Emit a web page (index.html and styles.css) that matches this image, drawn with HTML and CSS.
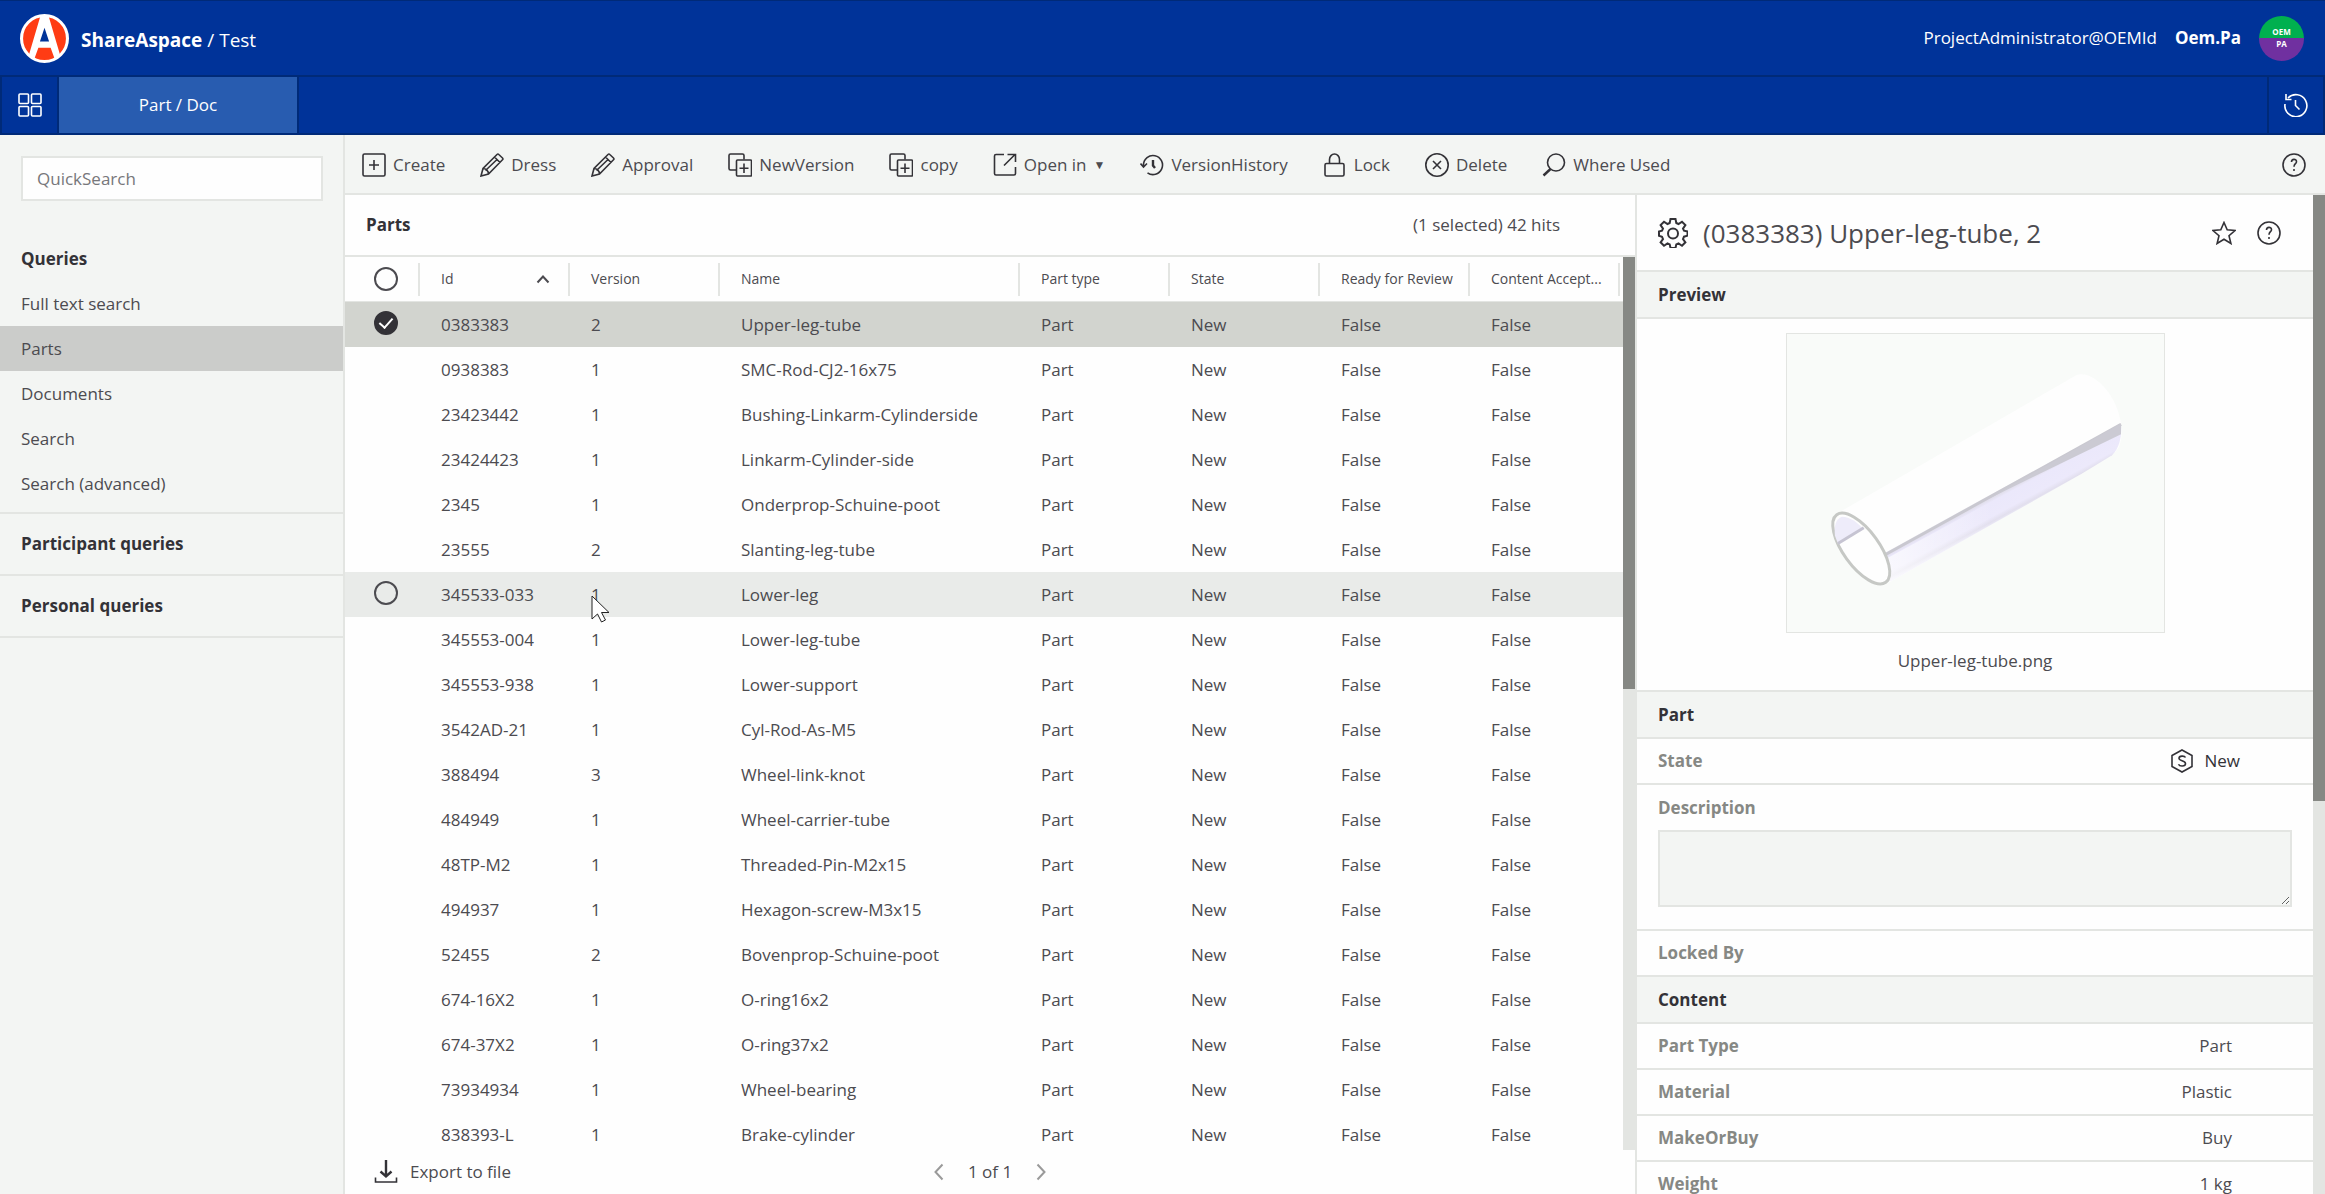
FILE: index.html
```html
<!DOCTYPE html>
<html lang="en">
  <head>
    <meta charset="utf-8" />
    <meta name="viewport" content="width=device-width, initial-scale=1" />
    <title>ShareAspace / Test</title>
    <link rel="stylesheet" href="styles.css">
  </head>
  <body>
    <!-- shared icons -->
    <svg class="sprite" aria-hidden="true">
      <symbol id="i-pencil" viewBox="0 0 24 24"><path d="M1 23l2-7.500L17 1.500c.6-.6 1.200-.6 1.800 0L22.500 5c.6.600.6 1.200 0 1.800L8.500 21zM3 15.500c3 0 5.500 2.500 5.500 5.500M14.500 4l5.500 5.500M5.500 17.500L17 6.500" /></symbol>
      <symbol id="i-copy" viewBox="0 0 24 24"><path d="M8 17H2.500C1.500 17 1 16.500 1 15.500V2.500C1 1.500 1.500 1 2.500 1h12c1 0 1.500.5 1.500 1.500V6.500" /><rect x="8.500" y="7" width="15" height="16" rx="1" /><path d="M16 10.500v9.500M11.500 15.200h9" /></symbol>
      <symbol id="i-help" viewBox="0 0 24 24"><circle cx="12" cy="12" r="11" /><path d="M9.500 9c0-3.500 5-3.500 5-.3 0 2-2.500 2.100-2.500 5M12 16v2" /></symbol>
    </svg>

    <header class="header">
      <a class="brand" href="#">
        <svg class="logo" viewBox="0 0 48 48">
          <circle cx="24" cy="24" r="22.500" fill="#ff3c14" stroke="#fff" stroke-width="3" />
          <path fill="#fff" d="M20 2h8l11.500 39-5.500 3-4-11H18l-4 11-5.500-3z" />
          <path fill="#003399" d="M24 13.500L28.500 27h-9z" />
        </svg>
        <span><b>ShareAspace</b> / Test</span>
      </a>
      <div class="user">
        <span>ProjectAdministrator@OEMId</span>
        <b>Oem.Pa</b>
        <span class="avatar"><span>OEM</span><span>PA</span></span>
      </div>
    </header>

    <nav class="nav">
      <button class="nav-btn" aria-label="Apps">
        <svg class="icon" viewBox="0 0 24 24"><rect x="1" y="1" width="9.500" height="9.500" rx="1" /><rect x="13.500" y="1" width="9.500" height="9.500" rx="1" /><rect x="1" y="13.500" width="9.500" height="9.500" rx="1" /><rect x="13.500" y="13.500" width="9.500" height="9.500" rx="1" /></svg>
      </button>
      <a class="tab" href="#">Part / Doc</a>
      <button class="nav-btn history" aria-label="History">
        <svg class="icon" viewBox="0 0 24 24"><path d="M4 5a11 11 0 1 1-3 6M2 1v5.500h5.500M11.500 7v5.500l4 4" /></svg>
      </button>
    </nav>

    <div class="page">
      <aside class="sidebar">
        <input class="quick" type="text" placeholder="QuickSearch" aria-label="QuickSearch" />
        <h2>Queries</h2>
        <a class="query" href="#">Full text search</a>
        <a class="query active" href="#">Parts</a>
        <a class="query" href="#">Documents</a>
        <a class="query" href="#">Search</a>
        <a class="query" href="#">Search (advanced)</a>
        <h2 class="group">Participant queries</h2>
        <h2 class="group">Personal queries</h2>
      </aside>

      <main class="main">
        <div class="toolbar">
          <button><svg class="icon" viewBox="0 0 24 24"><rect x="1" y="1" width="22" height="22" rx="1.500" /><path d="M12 7v10M7 12h10" /></svg>Create</button>
          <button><svg class="icon"><use href="#i-pencil" /></svg>Dress</button>
          <button><svg class="icon"><use href="#i-pencil" /></svg>Approval</button>
          <button><svg class="icon"><use href="#i-copy" /></svg>NewVersion</button>
          <button><svg class="icon"><use href="#i-copy" /></svg>copy</button>
          <button><svg class="icon" viewBox="0 0 24 24"><path d="M11 1.500H3C2 1.500 1.500 2 1.500 3v17.500c0 1 .5 1.500 1.500 1.500h18c1 0 1.500-.5 1.500-1.500V14M11 12.500L22 1.500M14.500 1.500H22.500V9" /></svg>Open in<span class="caret">▼</span></button>
          <button><svg class="icon" viewBox="0 0 24 24"><path d="M3.500 14V12a9.500 9.500 0 1 1 4 7.800M0.500 10.500l3 3.500 3.500-3.500" /><path class="thick" d="M13 7v5.500l2 2.500" /></svg>VersionHistory</button>
          <button><svg class="icon" viewBox="0 0 24 24"><rect x="2" y="10.500" width="19" height="12.500" rx="1.500" /><path d="M6.500 10V6.500a5 5.500 0 0 1 10 0V10" /></svg>Lock</button>
          <button><svg class="icon" viewBox="0 0 24 24"><circle cx="12" cy="12" r="11.200" /><path d="M8 8l8 8M16 8l-8 8" /></svg>Delete</button>
          <button><svg class="icon" viewBox="0 0 24 24"><circle cx="14" cy="9.500" r="8.500" /><path class="thick" d="M8.500 16L1.500 22.500" /></svg>Where Used</button>
          <button class="help" aria-label="Help"><svg class="icon"><use href="#i-help" /></svg></button>
        </div>

        <div class="split">
          <section class="list">
            <div class="list-title">
              <h1>Parts</h1>
              <span>(1 selected) 42 hits</span>
            </div>
            <div class="scroll-area">
              <div class="table-wrap">
                <table>
                  <colgroup>
                    <col class="c-check" /><col class="c" /><col class="c" /><col class="c-name" />
                    <col class="c" /><col class="c" /><col class="c" /><col class="c" /><col />
                  </colgroup>
                  <thead>
                    <tr>
                      <th><div><input type="checkbox" aria-label="Select all" /></div></th>
                      <th><div>Id<svg class="sort" viewBox="0 0 14 9"><path d="M1.500 7.500L7 1.500l5.500 6" /></svg></div></th>
                      <th><div>Version</div></th>
                      <th><div>Name</div></th>
                      <th><div>Part type</div></th>
                      <th><div>State</div></th>
                      <th><div>Ready for Review</div></th>
                      <th><div>Content Accept...</div></th>
                      <td></td>
                    </tr>
                  </thead>
                  <tbody>
                    <tr class="selected"><td><input type="checkbox" aria-label="Select row" checked /></td><td>0383383</td><td>2</td><td>Upper-leg-tube</td><td>Part</td><td>New</td><td>False</td><td>False</td><td></td></tr>
                    <tr><td></td><td>0938383</td><td>1</td><td>SMC-Rod-CJ2-16x75</td><td>Part</td><td>New</td><td>False</td><td>False</td><td></td></tr>
                    <tr><td></td><td>23423442</td><td>1</td><td>Bushing-Linkarm-Cylinderside</td><td>Part</td><td>New</td><td>False</td><td>False</td><td></td></tr>
                    <tr><td></td><td>23424423</td><td>1</td><td>Linkarm-Cylinder-side</td><td>Part</td><td>New</td><td>False</td><td>False</td><td></td></tr>
                    <tr><td></td><td>2345</td><td>1</td><td>Onderprop-Schuine-poot</td><td>Part</td><td>New</td><td>False</td><td>False</td><td></td></tr>
                    <tr><td></td><td>23555</td><td>2</td><td>Slanting-leg-tube</td><td>Part</td><td>New</td><td>False</td><td>False</td><td></td></tr>
                    <tr class="hovered"><td><input type="checkbox" aria-label="Select row" /></td><td>345533-033</td><td class="pointed">1<svg class="cursor" viewBox="0 0 19 28"><path d="M1 1v23l5.500-5 4 8 4-2-4-7.500H18z" /></svg></td><td>Lower-leg</td><td>Part</td><td>New</td><td>False</td><td>False</td><td></td></tr>
                    <tr><td></td><td>345553-004</td><td>1</td><td>Lower-leg-tube</td><td>Part</td><td>New</td><td>False</td><td>False</td><td></td></tr>
                    <tr><td></td><td>345553-938</td><td>1</td><td>Lower-support</td><td>Part</td><td>New</td><td>False</td><td>False</td><td></td></tr>
                    <tr><td></td><td>3542AD-21</td><td>1</td><td>Cyl-Rod-As-M5</td><td>Part</td><td>New</td><td>False</td><td>False</td><td></td></tr>
                    <tr><td></td><td>388494</td><td>3</td><td>Wheel-link-knot</td><td>Part</td><td>New</td><td>False</td><td>False</td><td></td></tr>
                    <tr><td></td><td>484949</td><td>1</td><td>Wheel-carrier-tube</td><td>Part</td><td>New</td><td>False</td><td>False</td><td></td></tr>
                    <tr><td></td><td>48TP-M2</td><td>1</td><td>Threaded-Pin-M2x15</td><td>Part</td><td>New</td><td>False</td><td>False</td><td></td></tr>
                    <tr><td></td><td>494937</td><td>1</td><td>Hexagon-screw-M3x15</td><td>Part</td><td>New</td><td>False</td><td>False</td><td></td></tr>
                    <tr><td></td><td>52455</td><td>2</td><td>Bovenprop-Schuine-poot</td><td>Part</td><td>New</td><td>False</td><td>False</td><td></td></tr>
                    <tr><td></td><td>674-16X2</td><td>1</td><td>O-ring16x2</td><td>Part</td><td>New</td><td>False</td><td>False</td><td></td></tr>
                    <tr><td></td><td>674-37X2</td><td>1</td><td>O-ring37x2</td><td>Part</td><td>New</td><td>False</td><td>False</td><td></td></tr>
                    <tr><td></td><td>73934934</td><td>1</td><td>Wheel-bearing</td><td>Part</td><td>New</td><td>False</td><td>False</td><td></td></tr>
                    <tr><td></td><td>838393-L</td><td>1</td><td>Brake-cylinder</td><td>Part</td><td>New</td><td>False</td><td>False</td><td></td></tr>
                  </tbody>
                </table>
              </div>
              <div class="scrollbar"><div class="thumb list-thumb"></div></div>
            </div>
            <footer class="list-footer">
              <button class="export"><svg class="icon" viewBox="0 0 24 24"><path d="M1.500 17.500v4.500h21v-4.500" /><path class="thick" d="M12 0v16M6.500 11.500l5.500 5 5.500-5" /></svg>Export to file</button>
              <div class="pager">
                <button aria-label="Previous page"><svg viewBox="0 0 10 18"><path d="M8.500 1.500L1.500 9l7 7.500" /></svg></button>
                <span>1 of 1</span>
                <button aria-label="Next page"><svg viewBox="0 0 10 18"><path d="M1.500 1.500L8.500 9l-7 7.500" /></svg></button>
              </div>
            </footer>
          </section>

          <section class="detail">
            <div class="detail-body">
              <div class="detail-title">
                <svg class="gear" viewBox="0 0 30 30"><path d="M12.500 1h5l.8 4 2.200 1 3.500-2.300 3.400 3.400-2.400 3.500 1 2.100 3.500.8v4.200l-3.500 1-1 2.300 2.400 3.300-3.400 3.500-3.500-2.400-2.200 1-.8 3.600h-5l-.8-3.600-2.200-1L6 27.800l-3.400-3.500L5 21l-1-2.300-3-1v-4.200l3-.8 1-2.100-2.400-3.500L6 3.700 9.500 6l2.200-1z" /><circle cx="15" cy="15.500" r="5" /></svg>
                <h2>(0383383) Upper-leg-tube, 2</h2>
                <button aria-label="Favourite"><svg class="icon" viewBox="0 0 24 24"><path d="M12 1.500l3.200 7.300 7.800.7-6 5.200 1.900 7.800L12 18.300 5.100 22.500 7 14.700 1 9.500l7.800-.7z" /></svg></button>
                <button aria-label="Help"><svg class="icon"><use href="#i-help" /></svg></button>
              </div>
              <h3>Preview</h3>
              <figure class="preview">
                <svg class="tube" viewBox="0 0 379 300">
                  <defs>
                    <linearGradient id="shade" gradientUnits="userSpaceOnUse" x1="216" y1="155" x2="230" y2="181">
                      <stop offset="0" stop-color="#fefefe" />
                      <stop offset="0.100" stop-color="#dddbe6" />
                      <stop offset="0.250" stop-color="#ebe8fb" />
                      <stop offset="0.700" stop-color="#ece9fb" />
                      <stop offset="0.850" stop-color="#e2dfee" />
                      <stop offset="1" stop-color="#f0eefb" />
                    </linearGradient>
                    <linearGradient id="fade" x1="0" x2="1">
                      <stop offset="0" stop-color="#fff" stop-opacity="0.700" />
                      <stop offset="0.450" stop-color="#fff" stop-opacity="0" />
                    </linearGradient>
                  </defs>
                  <path fill="#fefefe" d="M55 178L290 42c14-7 38 13 45 43 4 20 0 31-8 37L103 250z" />
                  <path fill="url(#shade)" d="M99 220L336 88c1 14-1 26-9 34l-31 19L104 249z" />
                  <path fill="url(#fade)" d="M100 226L336 98c1 10-1 18-9 24l-31 19L104 249z" />
                  <path fill="none" stroke="#c9c8d0" stroke-width="3" d="M99 222L336 91" />
                  <path fill="#cbcad3" d="M200 167L336 90v11z" />
                  <ellipse cx="74.500" cy="216" rx="42" ry="18" transform="rotate(54 74.500 216)" fill="#fefefe" stroke="#c6c8c5" stroke-width="3" />
                  <path fill="#eeecfa" d="M48 203c-1-10 1-17 7-19 8 0 16 6 20 11L51 211z" />
                  <path stroke="#c6c4d2" stroke-width="3" d="M51 211l26-16" />
                </svg>
                <figcaption>Upper-leg-tube.png</figcaption>
              </figure>
              <h3>Part</h3>
              <dl>
                <div class="field state">
                  <dt>State</dt>
                  <dd><svg class="icon" viewBox="0 0 24 24"><path d="M12 1l10 5.500v11L12 23 2 17.500v-11zM15.500 8.500c-1-2-6.500-2-6.500.8 0 3 6.500 2 6.500 5.400 0 3-6 3-7 .6" /></svg>New</dd>
                </div>
              </dl>
              <div class="description">
                <label for="description">Description</label>
                <textarea id="description"></textarea>
              </div>
              <dl>
                <div class="field"><dt>Locked By</dt><dd></dd></div>
              </dl>
              <h3>Content</h3>
              <dl>
                <div class="field"><dt>Part Type</dt><dd>Part</dd></div>
                <div class="field"><dt>Material</dt><dd>Plastic</dd></div>
                <div class="field"><dt>MakeOrBuy</dt><dd>Buy</dd></div>
                <div class="field"><dt>Weight</dt><dd>1 kg</dd></div>
              </dl>
            </div>
            <div class="scrollbar"><div class="thumb detail-thumb"></div></div>
          </section>
        </div>
      </main>
    </div>
  </body>
</html>
```

FILE: styles.css
```css
* {
  box-sizing: border-box;
}
body {
  margin: 0;
  height: 100vh;
  display: flex;
  flex-direction: column;
  overflow: hidden;
  font-family: "Open Sans", "Noto Sans", sans-serif;
  font-size: 17px;
  line-height: 24px;
  color: #4c4b50;
  background-color: #fefefe;
}
a {
  color: inherit;
  text-decoration: none;
}
h1,
h2,
h3,
dl,
dd,
figure {
  margin: 0;
}
h1,
h2,
h3 {
  font-size: 17px;
  font-weight: 700;
  color: #333237;
}
b {
  font-weight: 700;
}
button {
  display: flex;
  align-items: center;
  padding: 0;
  border: none;
  background: none;
  font: inherit;
  color: inherit;
  cursor: pointer;
}
svg {
  flex: none;
}
.sprite {
  display: none;
}
.icon {
  width: 24px;
  height: 24px;
  fill: none;
  stroke: #333237;
  stroke-width: 1.6px;
}
.thick {
  stroke-width: 2.4px;
}

/* top bars */
.header {
  height: 77px;
  flex: none;
  display: flex;
  justify-content: space-between;
  align-items: center;
  padding: 0 21px 0 20px;
  color: #fff;
  background-color: #003399;
  border-top: 1px solid #002a78;
  border-bottom: 2px solid #002a78;
}
.brand {
  display: flex;
  align-items: center;
  gap: 12px;
  font-size: 19px;
  line-height: 28px;
}
.brand span {
  padding-top: 3px;
}
.logo {
  width: 49px;
  height: 49px;
}
.user {
  display: flex;
  align-items: center;
  gap: 18px;
}
.avatar {
  width: 45px;
  height: 45px;
  display: flex;
  flex-direction: column;
  justify-content: center;
  border-radius: 50%;
  background: linear-gradient(#00b04f 50%, #7030a0 50%);
  font-size: 8px;
  font-weight: 700;
  line-height: 12px;
  text-align: center;
}
.nav {
  height: 58px;
  flex: none;
  display: flex;
  color: #fff;
  background-color: #003399;
  border: solid #002a78;
  border-width: 0 2px 2px;
}
.nav .icon {
  stroke: #fff;
}
.nav-btn {
  width: 57px;
  justify-content: center;
  border-right: 2px solid #002a78;
}
.history {
  margin-left: auto;
  width: 56px;
  border-right: none;
  border-left: 2px solid #002a78;
}
.tab {
  width: 240px;
  line-height: 56px;
  text-align: center;
  background-color: #285cb0;
  border-right: 2px solid #002a78;
}

.page {
  flex: 1;
  min-height: 0;
  display: flex;
}
.sidebar {
  width: 345px;
  flex: none;
  background-color: #f3f5f3;
  border-right: 2px solid #e3e5e2;
}
.quick {
  display: block;
  width: 302px;
  height: 45px;
  margin: 21px 0 35px 21px;
  padding: 0 14px;
  font: inherit;
  border: 2px solid #e3e5e2;
  background-color: #fefefe;
}
.quick::placeholder {
  color: #77777b;
}
.sidebar h2,
.query {
  display: block;
  padding: 0 21px;
  line-height: 45px;
}
.active {
  background-color: #cbccca;
}
.query + .group {
  margin-top: 6px;
  border-top: 2px solid #e3e5e2;
}
.sidebar .group {
  line-height: 60px;
  border-bottom: 2px solid #e3e5e2;
}

.main {
  flex: 1;
  min-width: 0;
  display: flex;
  flex-direction: column;
}
.toolbar {
  height: 60px;
  flex: none;
  display: flex;
  gap: 35px;
  padding: 2px 19px 0 17px;
  background-color: #f3f5f3;
  border-bottom: 2px solid #e3e5e2;
}
.toolbar button {
  gap: 7px;
}
.toolbar .help {
  margin-left: auto;
}
.caret {
  font-size: 12px;
}
.split {
  flex: 1;
  min-height: 0;
  display: flex;
}

/* parts list */
.list {
  flex: 1;
  min-width: 0;
  display: flex;
  flex-direction: column;
}
.list-title {
  height: 62px;
  flex: none;
  display: flex;
  align-items: center;
  justify-content: space-between;
  padding: 0 75px 0 21px;
  border-bottom: 2px solid #e3e5e2;
}
.scroll-area {
  flex: 1;
  min-height: 0;
  display: flex;
}
.table-wrap {
  flex: 1;
  min-width: 0;
  overflow: hidden;
}
table {
  width: 100%;
  table-layout: fixed;
  border-collapse: separate;
  border-spacing: 0;
}
.c-check {
  width: 75px;
}
.c {
  width: 150px;
}
.c-name {
  width: 300px;
}
th {
  height: 45px;
  padding: 0;
  border-bottom: 1px solid #e3e5e2;
  font-size: 14px;
  font-weight: 400;
  text-align: left;
  white-space: nowrap;
}
thead td {
  border-bottom: 1px solid #e3e5e2;
}
th div {
  height: 33px;
  display: flex;
  align-items: center;
  justify-content: space-between;
  padding: 0 18px 0 21px;
  border-right: 2px solid #e3e5e2;
}
th:nth-child(7) div,
th:nth-child(8) div {
  padding-right: 0;
}
.sort {
  width: 14px;
  height: 9px;
  fill: none;
  stroke: currentColor;
  stroke-width: 2px;
}
tbody td {
  height: 45px;
  padding: 0 21px;
}
th:first-child div,
tbody td:first-child {
  padding: 0 0 0 29px;
}
tbody td:first-child {
  padding-bottom: 4px;
}
tbody td:last-child {
  padding: 0;
}
.selected {
  background-color: #d2d4cf;
}
.hovered {
  background-color: #e9ebe9;
}
input[type="checkbox"] {
  appearance: none;
  display: flex;
  align-items: center;
  justify-content: center;
  flex: none;
  width: 24px;
  height: 24px;
  margin: 0;
  border: 2px solid #4c4b50;
  border-radius: 50%;
}
input[type="checkbox"]:checked {
  border-color: #333237;
  background-color: #333237;
}
input[type="checkbox"]:checked::after {
  content: "";
  width: 6px;
  height: 11px;
  margin-bottom: 3px;
  border: solid #fff;
  border-width: 0 2px 2px 0;
  transform: rotate(42deg);
}
.pointed {
  position: relative;
}
.cursor {
  position: absolute;
  left: 21px;
  top: 23px;
  width: 19px;
  height: 28px;
  fill: #fff;
  stroke: #222;
}
.scrollbar {
  width: 12px;
  flex: none;
  background-color: #e3e5e2;
}
.thumb {
  background-color: #868884;
}
.list-thumb {
  height: 48.4%;
}
.detail-thumb {
  height: 60.7%;
}
.list-footer {
  height: 44px;
  flex: none;
  display: grid;
  grid-template-columns: 1fr auto 1fr;
  align-items: center;
  padding: 0 29px;
}
.export {
  gap: 12px;
}
.pager {
  display: flex;
  gap: 24px;
}
.pager svg {
  width: 10px;
  height: 18px;
  fill: none;
  stroke: #9a9a9a;
  stroke-width: 2px;
}

/* detail panel */
.detail {
  width: 690px;
  flex: none;
  display: flex;
  border-left: 2px solid #e3e5e2;
}
.detail-body {
  flex: 1;
  min-width: 0;
  overflow: hidden;
}
.detail-title {
  height: 77px;
  display: flex;
  align-items: center;
  gap: 21px;
  padding: 0 32px 0 21px;
  border-bottom: 2px solid #e3e5e2;
}
.gear {
  width: 30px;
  height: 30px;
  fill: none;
  stroke: #333237;
  stroke-width: 2px;
}
.detail-title h2 {
  flex: 1;
  margin-left: -6px;
  font-size: 26px;
  font-weight: 400;
  color: #4c4b50;
}
.detail h3 {
  padding: 0 21px;
  line-height: 45px;
  background-color: #f3f5f3;
  border-bottom: 2px solid #e3e5e2;
}
.preview {
  display: flex;
  flex-direction: column;
  align-items: center;
  gap: 16px;
  padding: 14px 0 17px;
  border-bottom: 2px solid #e3e5e2;
}
.tube {
  width: 379px;
  height: 300px;
  border: 1px solid #e3e5e2;
  background-color: #f9fbf9;
}
.field {
  height: 46px;
  display: flex;
  align-items: center;
  justify-content: space-between;
  padding: 0 81px 0 21px;
  border-bottom: 2px solid #e3e5e2;
}
.state {
  padding-right: 73px;
}
.state dd {
  display: flex;
  gap: 10px;
  color: #333237;
}
dt,
.description label {
  font-weight: 700;
  color: #868884;
}
.description {
  display: flex;
  flex-direction: column;
  gap: 10px;
  padding: 11px 21px 22px;
  border-bottom: 2px solid #e3e5e2;
}
.description textarea {
  width: 100%;
  height: 77px;
  font: inherit;
  border: 2px solid #e3e5e2;
  background-color: #f3f5f3;
}
```
